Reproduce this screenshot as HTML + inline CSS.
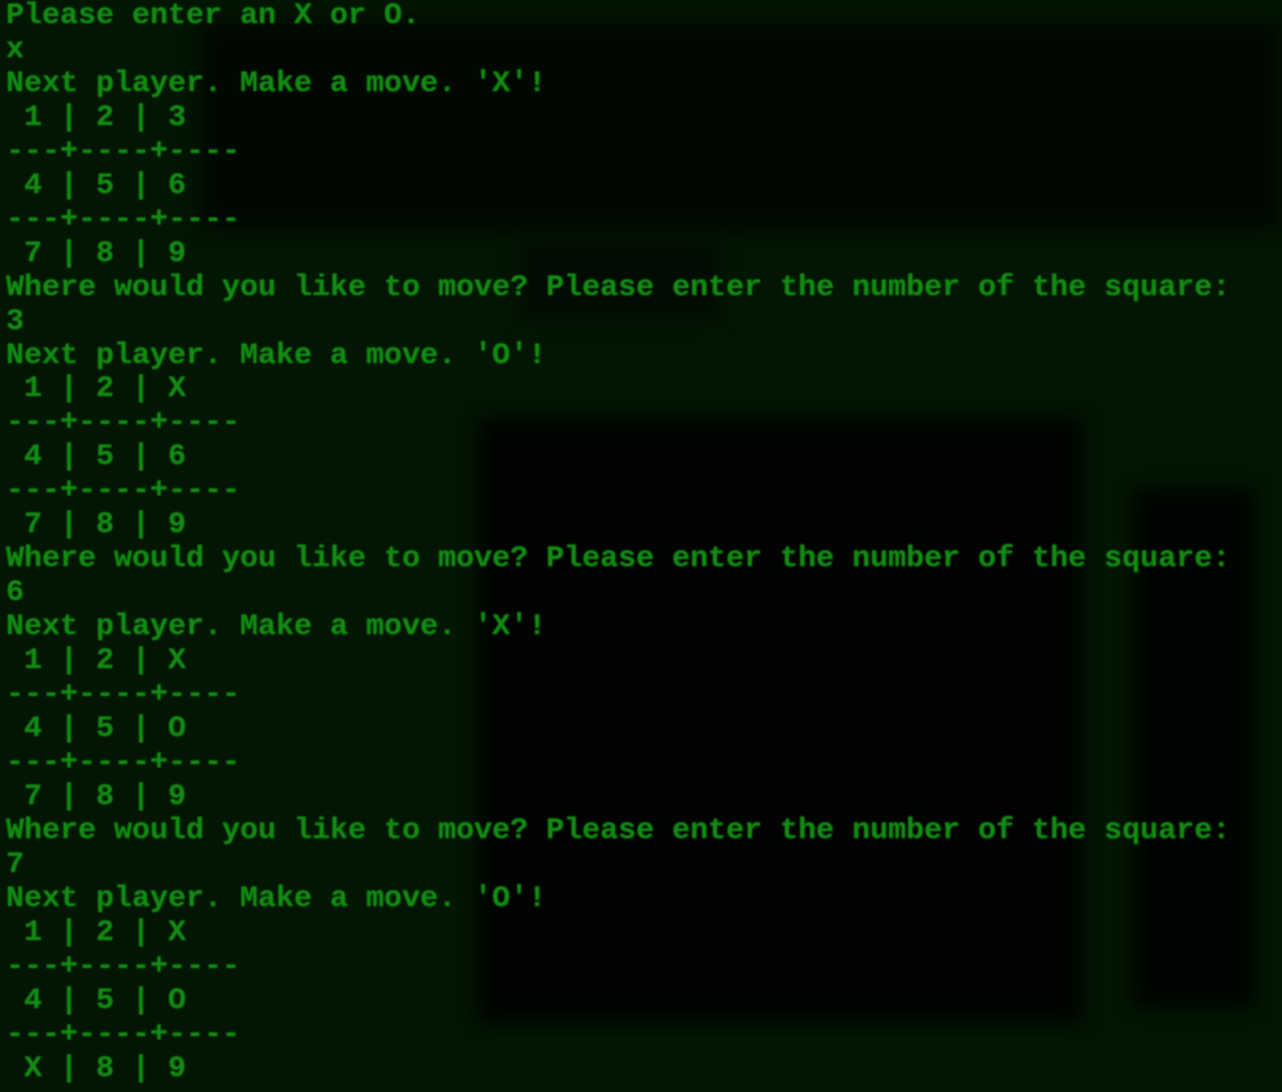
<!DOCTYPE html>
<html><head><meta charset="utf-8"><style>
html,body{margin:0;padding:0;width:1282px;height:1092px;overflow:hidden;background:#031603;}
.bg{position:absolute;filter:blur(10px);}
pre{position:absolute;left:6px;top:0px;margin:0;font-family:"Liberation Mono",monospace;font-weight:bold;font-size:30px;line-height:33.95px;color:#128c12;text-shadow:0 0 2px #0a4a0a;filter:blur(0.9px);letter-spacing:0}
</style></head><body>
<div class="bg" style="left:200px;top:20px;width:1082px;height:210px;background:#010801"></div>
<div class="bg" style="left:520px;top:240px;width:200px;height:80px;background:#020c02"></div>
<div class="bg" style="left:478px;top:418px;width:605px;height:605px;background:#000300"></div>
<div class="bg" style="left:1133px;top:488px;width:122px;height:520px;background:#000400"></div>
<pre>Please enter an X or O.
x
Next player. Make a move. 'X'!
 1 | 2 | 3
---+----+----
 4 | 5 | 6
---+----+----
 7 | 8 | 9
Where would you like to move? Please enter the number of the square:
3
Next player. Make a move. 'O'!
 1 | 2 | X
---+----+----
 4 | 5 | 6
---+----+----
 7 | 8 | 9
Where would you like to move? Please enter the number of the square:
6
Next player. Make a move. 'X'!
 1 | 2 | X
---+----+----
 4 | 5 | O
---+----+----
 7 | 8 | 9
Where would you like to move? Please enter the number of the square:
7
Next player. Make a move. 'O'!
 1 | 2 | X
---+----+----
 4 | 5 | O
---+----+----
 X | 8 | 9</pre>
</body></html>
